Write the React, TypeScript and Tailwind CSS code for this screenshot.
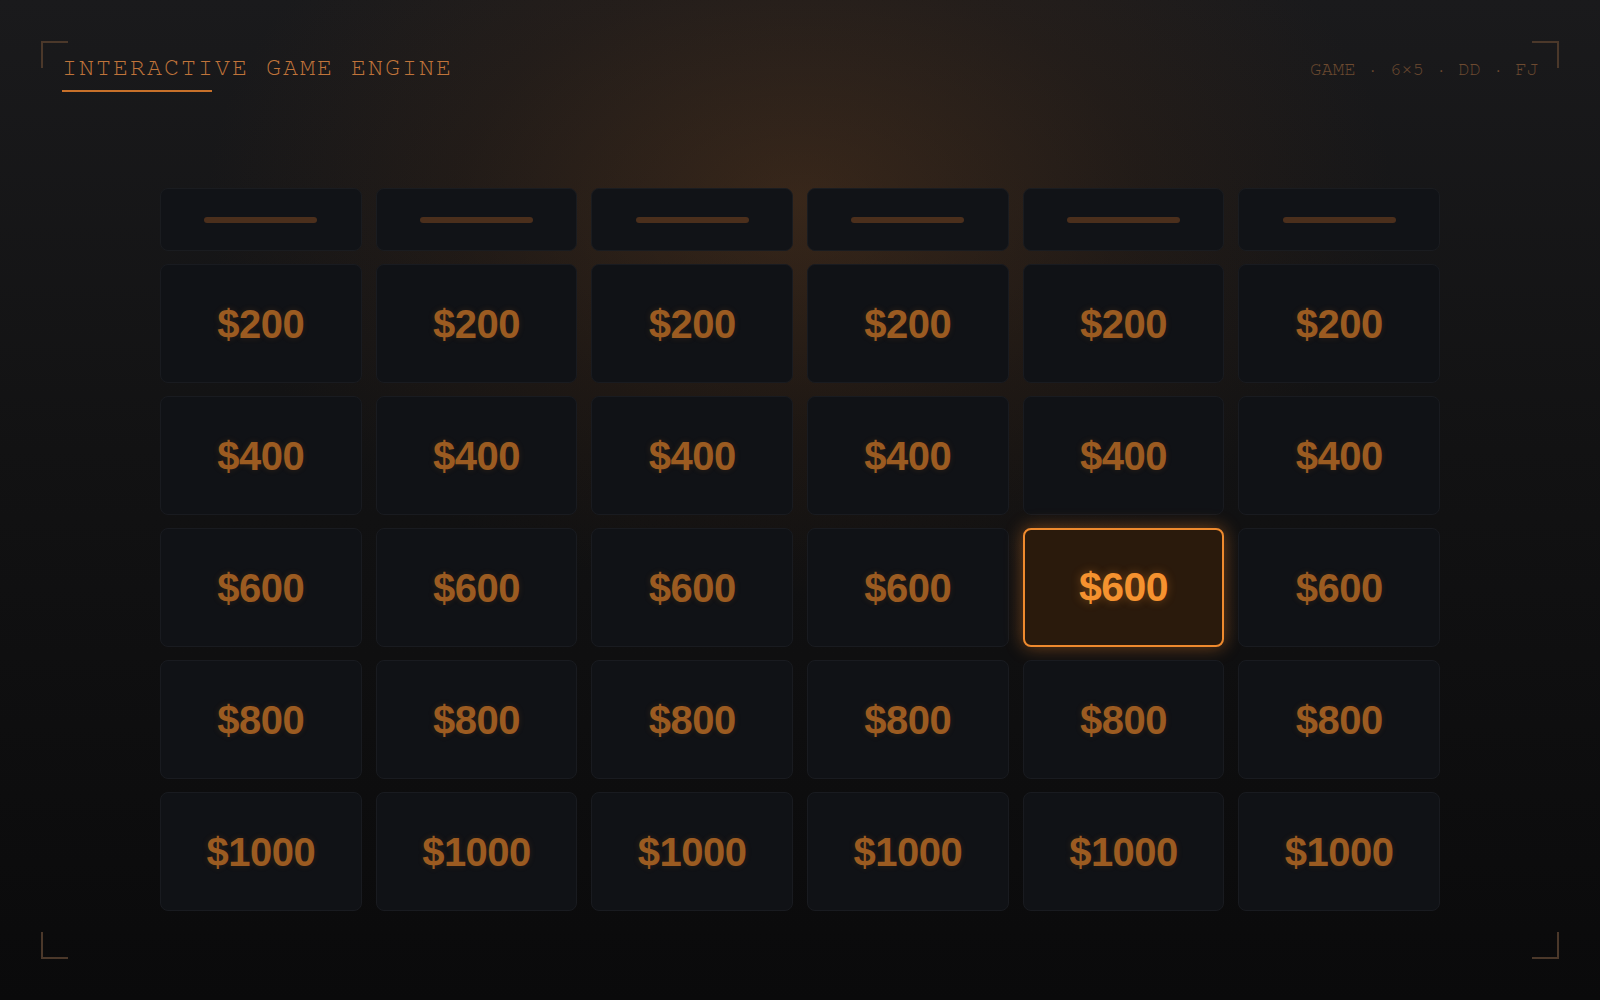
const categories = 6;
const values = [200, 400, 600, 800, 1000];

// the tile the host has picked up
const active = { row: 2, col: 4 };

function Corner({ className }: { className: string }) {
  return <div className={`absolute w-[27px] h-[27px] border-[#4b382a] ${className}`}></div>;
}

function HeaderCell() {
  return (
    <div className="h-[63px] rounded-lg bg-[#111317] border border-[#1a1c20] flex items-center justify-center">
      <div className="w-[113px] h-[6px] rounded-full bg-[#4b2f1c]"></div>
    </div>
  );
}

function ValueCell({ value, selected }: { value: number; selected: boolean }) {
  if (selected) {
    return (
      <button className="h-[119px] rounded-lg bg-[#2a1a0c] border-2 border-[#ef8a2e] shadow-[0_0_18px_rgba(240,130,40,0.45)] flex items-center justify-center">
        <span className="font-['Liberation_Sans',Arial,sans-serif] font-bold text-[41px] tracking-[-0.5px] text-[#f5922f] [text-shadow:0_0_10px_rgba(245,146,47,0.35)]">
          ${value}
        </span>
      </button>
    );
  }
  return (
    <button className="h-[119px] rounded-lg bg-[#101216] border border-[#191b20] flex items-center justify-center">
      <span className="font-['Liberation_Sans',Arial,sans-serif] font-bold text-[40px] tracking-[-0.5px] text-[#9b5b21] [text-shadow:0_0_6px_rgba(155,91,33,0.2)]">
        ${value}
      </span>
    </button>
  );
}

export default function App() {
  return (
    <div className="relative w-full h-[1000px] overflow-hidden bg-[linear-gradient(180deg,#1a1a1c_0%,#121213_45%,#0a0a0b_100%)]">
      {/* warm light over the top of the board */}
      <div className="absolute left-1/2 top-[-200px] -translate-x-1/2 w-[1200px] h-[800px] rounded-full bg-[radial-gradient(ellipse_at_center,rgba(120,70,30,0.34)_0%,rgba(90,50,20,0.16)_40%,rgba(0,0,0,0)_70%)]"></div>

      <Corner className="left-[41px] top-[41px] border-l-2 border-t-2" />
      <Corner className="right-[41px] top-[41px] border-r-2 border-t-2" />
      <Corner className="left-[41px] bottom-[41px] border-l-2 border-b-2" />
      <Corner className="right-[41px] bottom-[41px] border-r-2 border-b-2" />

      <div className="relative flex items-start justify-between px-[62px] pt-[54px]">
        <div>
          <h1 className="font-['FreeMono','Liberation_Mono',monospace] font-normal text-[25px] leading-[28px] tracking-[2px] text-[#c0743a]">
            INTERACTIVE GAME ENGINE
          </h1>
          <div className="mt-[8px] w-[150px] h-[2px] bg-[#c7702a]"></div>
        </div>
        <div className="pt-[4px] font-['FreeMono','Liberation_Mono',monospace] text-[19px] leading-[24px] text-[#6d4a30]">
          GAME · 6×5 · DD · FJ
        </div>
      </div>

      <div className="relative mx-auto mt-[96px] w-[1280px] grid grid-cols-6 gap-x-[14px] gap-y-[13px]">
        {Array.from({ length: categories }).map((_, i) => (
          <HeaderCell key={`h${i}`} />
        ))}
        {values.map((v, r) =>
          Array.from({ length: categories }).map((_, c) => (
            <ValueCell key={`${r}-${c}`} value={v} selected={r === active.row && c === active.col} />
          ))
        )}
      </div>
    </div>
  );
}
